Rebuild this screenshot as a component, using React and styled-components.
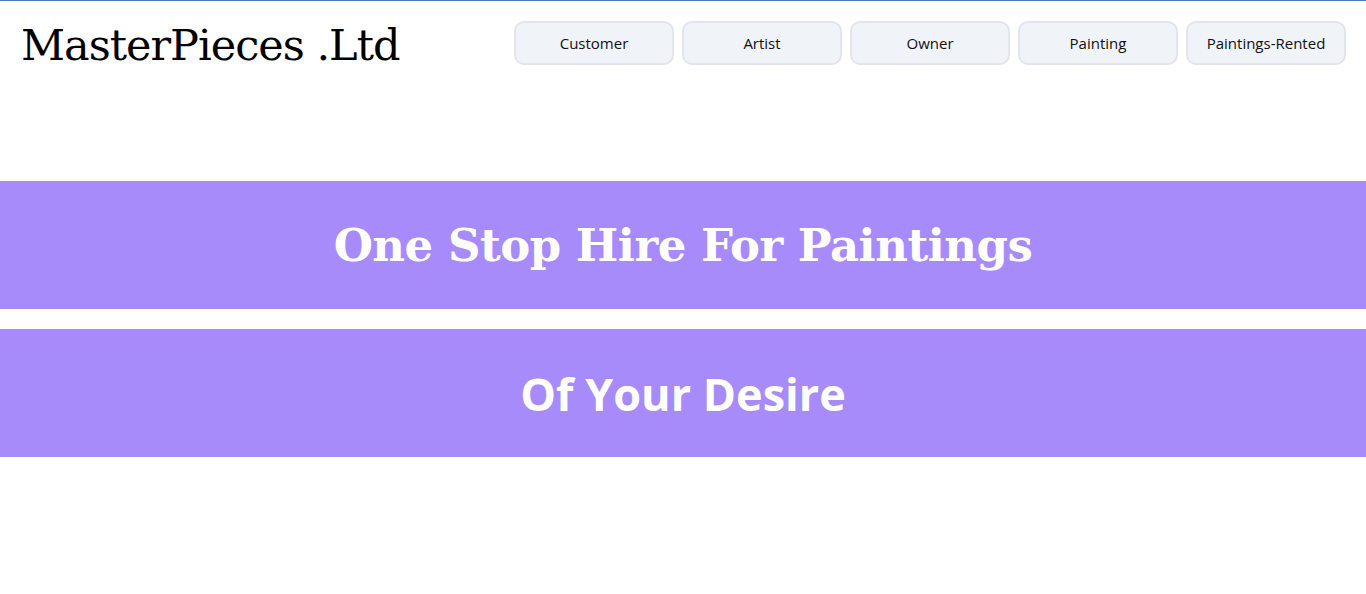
import React from "react";
import styled, { createGlobalStyle } from "styled-components";

const Global = createGlobalStyle`
  html, body { margin: 0; padding: 0; background: #fff; }
  body { border-top: 1px solid #4a7ab6; }
`;

const Header = styled.header`
  display: flex;
  justify-content: space-between;
  align-items: flex-start;
  padding: 20px 20px 0 21px;
  height: 180px;
  box-sizing: border-box;
`;

const Title = styled.h1`
  margin: 0;
  font-family: "DejaVu Serif", Georgia, serif;
  font-weight: 400;
  font-size: 43px;
  line-height: 48px;
  color: #000;
  letter-spacing: -1px;
`;

const Nav = styled.nav`
  display: flex;
  gap: 8px;
`;

const NavButton = styled.button`
  width: 160px;
  height: 44px;
  border: 2px solid #e2e6ec;
  border-radius: 10px;
  background: #f0f3f8;
  font-family: "Open Sans", "Noto Sans", sans-serif;
  font-size: 15px;
  color: #111;
  cursor: pointer;
`;

const Banner = styled.section`
  height: 128px;
  background: #a78bfa;
  display: flex;
  align-items: center;
  justify-content: center;
  margin-bottom: 20px;
`;

const BannerText = styled.h2`
  margin: 0;
  color: #fff;
  font-weight: 700;
  font-size: ${(p) => p.$size}px;
  font-family: ${(p) =>
    p.$serif ? `"DejaVu Serif", Georgia, serif` : `"Open Sans", "Noto Sans", sans-serif`};
  letter-spacing: ${(p) => (p.$serif ? "-0.5px" : "0")};
`;

const items = ["Customer", "Artist", "Owner", "Painting", "Paintings-Rented"];

export default function App() {
  return (
    <>
      <Global />
      <Header>
        <Title>MasterPieces .Ltd</Title>
        <Nav>
          {items.map((i) => (
            <NavButton key={i}>{i}</NavButton>
          ))}
        </Nav>
      </Header>
      <Banner>
        <BannerText $serif $size={45}>One Stop Hire For Paintings</BannerText>
      </Banner>
      <Banner>
        <BannerText $size={45}>Of Your Desire</BannerText>
      </Banner>
    </>
  );
}
